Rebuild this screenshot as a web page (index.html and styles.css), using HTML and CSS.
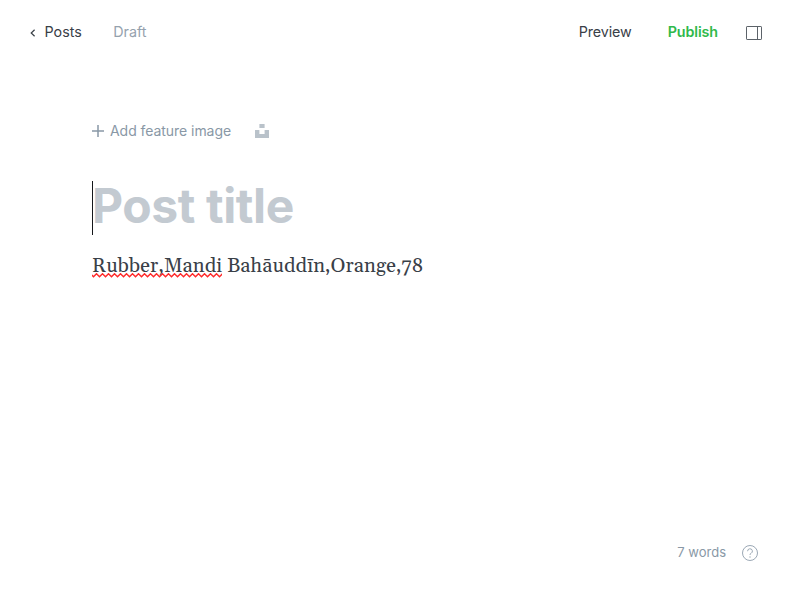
FILE: index.html
```html
<!DOCTYPE html>
<html lang="en">
<head>
<meta charset="utf-8">
<title>Post editor</title>
<link rel="stylesheet" href="styles.css">
</head>
<body>
<div class="editor">
  <header class="topbar">
    <a class="back"><svg class="chevron" width="7" height="8" viewBox="0 0 7 8"><path d="M4.6 .7 1.2 4 4.6 7.3"/></svg><span>Posts</span></a>
    <span class="status">Draft</span>
    <span class="preview">Preview</span>
    <span class="publish">Publish</span>
    <svg class="sidebar-icon" width="16" height="14" viewBox="0 0 16 14"><rect x=".5" y=".5" width="15" height="13" rx=".6"/><path d="M11.5 .5v13"/></svg>
  </header>
  <main class="content">
    <div class="feature">
      <svg class="plus" width="12" height="12" viewBox="0 0 12 12"><path d="M6 0v12M0 6h12"/></svg>
      <span class="feature-label">Add feature image</span>
      <svg class="unsplash" width="14" height="14" viewBox="0 0 14 14"><path d="M4.4 0h5.2v3.9H4.4zM0 6.1h4.4V10h5.2V6.1H14V14H0z"/></svg>
    </div>
    <h1 class="title">Post title</h1>
    <p class="body-text"><span class="misspelled">Rubber,Mandi<svg class="squiggle" width="130" height="5" viewBox="0 0 130 5"><defs><pattern id="wave" width="6" height="5" patternUnits="userSpaceOnUse"><path d="M-1.5 .8 1.5 3.8 4.5 .8 7.5 3.8"/></pattern></defs><rect width="130" height="5" fill="url(#wave)"/></svg></span> <span class="rest">Bahāuddīn,Orange,78</span></p>
  </main>
  <footer class="footer">
    <span class="words">7 words</span>
    <svg class="help" width="16" height="16" viewBox="0 0 16 16"><circle cx="8" cy="8" r="7.5"/><path d="M5.6 6.2a2.4 2.4 0 1 1 3.5 2.1c-.8.4-1.1.7-1.1 1.6"/><circle class="dot" cx="8" cy="12" r=".7"/></svg>
  </footer>
</div>
</body>
</html>
```
FILE: styles.css
```css
* { box-sizing: border-box; }
body { margin: 0; background: #fff; font-family: Inter, sans-serif; color: #394047; }
svg { display: block; fill: none; flex: none; }
.editor { height: 600px; display: flex; flex-direction: column; }
.topbar { height: 64px; padding: 2px 38px 0 30px; display: flex; align-items: center; font-size: 14.3px; line-height: 20px; }
.topbar span { position: relative; top: -1px; }
.back { display: flex; align-items: center; gap: 7.5px; }
.chevron { stroke: #394047; stroke-width: 1.2; }
.status { margin-left: 31.5px; color: #95a1ad; }
.preview { margin-left: auto; letter-spacing: -.08px; }
.publish { margin-left: 36px; color: #30b94b; font-weight: 600; letter-spacing: -.1px; }
.sidebar-icon { margin-left: 28px; stroke: #5c6269; }
.content { flex: 1; padding: 57px 92px 0; }
.feature { display: flex; align-items: center; height: 20px; color: #8998a6; font-size: 14px; }
.plus { stroke: #8998a6; stroke-width: 1.5; }
.feature-label { margin-left: 6px; letter-spacing: -.05px; position: relative; top: -1px; }
.unsplash { margin-left: 24px; fill: #b9c2ca; }
.title { margin: 40px 0 0; height: 54px; border-left: 1px solid #15171a; font-size: 48px; line-height: 50px; font-weight: 700; color: #c3cad1; letter-spacing: -.4px; text-indent: -1px; }
.body-text { margin: 15px 0 0; font-family: Georgia, Gelasio, "Liberation Serif", serif; font-size: 20px; letter-spacing: .1px; line-height: 32px; white-space: nowrap; }
.misspelled { position: relative; }
.squiggle { position: absolute; left: 0; bottom: 1px; }
.squiggle path { stroke: #ff2a2a; stroke-width: 1.5; }
.footer { height: 48px; margin-bottom: 23px; padding-right: 42px; display: flex; justify-content: flex-end; align-items: center; gap: 16px; font-size: 13px; color: #8998a6; }
.words { position: relative; top: -1px; }
.help { stroke: #9ba8b5; }
.dot { fill: #9ba8b5; stroke: none; }
```
